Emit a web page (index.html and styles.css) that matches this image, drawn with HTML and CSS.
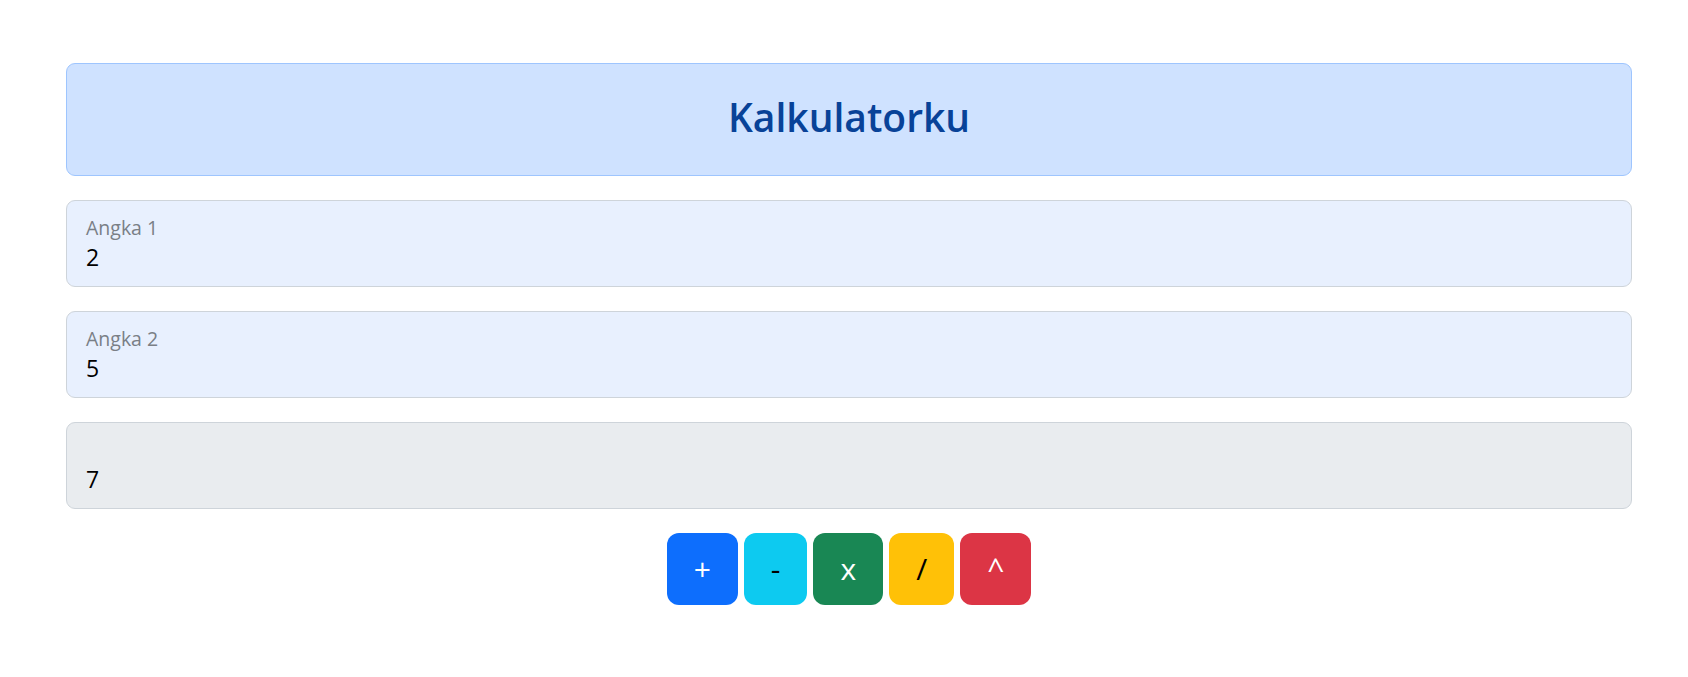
FILE: index.html
```html
<!DOCTYPE html>
<html lang="id">
<head>
<meta charset="utf-8">
<title>Kalkulatorku</title>
<link rel="stylesheet" href="styles.css">
</head>
<body>
<main class="container">
  <div class="alert">
    <h1 class="title">Kalkulatorku</h1>
  </div>
  <div class="field">
    <label class="field-label">Angka 1</label>
    <div class="field-value">2</div>
  </div>
  <div class="field">
    <label class="field-label">Angka 2</label>
    <div class="field-value">5</div>
  </div>
  <div class="field field-disabled">
    <label class="field-label"></label>
    <div class="field-value">7</div>
  </div>
  <div class="buttons">
    <button class="btn btn-primary">+</button>
    <button class="btn btn-info">-</button>
    <button class="btn btn-success">x</button>
    <button class="btn btn-warning">/</button>
    <button class="btn btn-danger">^</button>
  </div>
</main>
</body>
</html>
```

FILE: styles.css
```css
* { box-sizing: border-box; }

body {
  margin: 0;
  background: #fff;
  font-family: "Open Sans", "Noto Sans", sans-serif;
  color: #212529;
}

.container {
  padding: 63px 56px 0 66px;
  display: flex;
  flex-direction: column;
  gap: 24px;
}

.alert {
  height: 113px;
  padding-bottom: 5px;
  background: #cfe2ff;
  border: 1px solid #9ec5fe;
  border-radius: 9px;
  display: flex;
  align-items: center;
  justify-content: center;
}

.title {
  margin: 0;
  font-size: 39px;
  font-weight: 600;
  color: #084298;
  line-height: 1.2;
}

.field {
  height: 87px;
  background: #e8f0fe;
  border: 1px solid #ced4da;
  border-radius: 9px;
  padding: 15px 20px 0 19px;
  display: flex;
  flex-direction: column;
}

.field-disabled {
  background: #e9ecef;
}

.field-label {
  height: 24px;
  font-size: 19.5px;
  line-height: 24px;
  color: #7a7f86;
}

.field-value {
  margin-top: 2px;
  font-size: 23px;
  line-height: 30px;
  color: #000;
}

.buttons {
  display: flex;
  justify-content: center;
  gap: 6px;
}

.btn {
  height: 72px;
  padding: 0 26px;
  border: 1px solid transparent;
  border-radius: 12px;
  font-family: inherit;
  font-size: 30px;
  line-height: 1;
  display: flex;
  align-items: center;
  justify-content: center;
  cursor: pointer;
}

.btn-primary { background: #0d6efd; color: #fff; }
.btn-info { background: #0dcaf0; color: #000; }
.btn-success { background: #198754; color: #fff; }
.btn-warning { background: #ffc107; color: #000; }
.btn-danger { background: #dc3545; color: #fff; }
```
